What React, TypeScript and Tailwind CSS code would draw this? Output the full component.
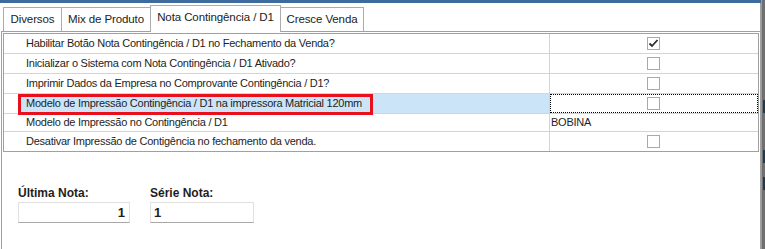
import React from 'react';
import clsx from 'clsx';

type Row = {
    label: string;
    kind: 'check' | 'text';
    checked?: boolean;
    value?: string;
    h: string;
    selected?: boolean;
};

const rows: Row[] = [
    { label: 'Habilitar Botão Nota Contingência / D1 no Fechamento da Venda?', kind: 'check', checked: true, h: 'h-[20px]' },
    { label: 'Inicializar o Sistema com Nota Contingência / D1 Ativado?', kind: 'check', h: 'h-[20px]' },
    { label: 'Imprimir Dados da Empresa no Comprovante Contingência / D1?', kind: 'check', h: 'h-[20px]' },
    { label: 'Modelo de Impressão Contingência / D1 na impressora Matricial 120mm', kind: 'check', h: 'h-[20px]', selected: true },
    { label: 'Modelo de Impressão no Contingência / D1', kind: 'text', value: 'BOBINA', h: 'h-[18px]' },
    { label: 'Desativar Impressão de Contigência no fechamento da venda.', kind: 'check', h: 'h-[19px]' },
];

const tabs = [
    { name: 'Diversos', w: 'w-[58px]' },
    { name: 'Mix de Produto', w: 'w-[89px]' },
    { name: 'Nota Contingência / D1', w: 'w-[131px]', active: true },
    { name: 'Cresce Venda', w: 'w-[83px]' },
];

const CheckBox = ({ checked }: { checked?: boolean }) => (
    <div className="w-[13px] h-[13px] border border-[#a9a9a9] bg-white flex items-center justify-center">
        {checked && (
            <svg width="11" height="11" viewBox="0 0 11 11">
                <polyline points="1.5,5.5 4,8 9.5,2" fill="none" stroke="#2b2b2b" strokeWidth="1.8" />
            </svg>
        )}
    </div>
);

export default function App() {
    return (
        <div className="w-[765px] h-[249px] flex bg-white overflow-hidden font-['Liberation_Sans',Arial,sans-serif] text-[11px] text-[#1e1e1e]">
            <div className="w-[761px] flex flex-col">
                <div className="h-[3px] bg-[#3e6b9e]" />
                <div className="flex-1 flex flex-col border-r border-[#a0a0a0]">
                    {/* tabs */}
                    <div className="h-[28px] flex items-end pl-[3px]">
                        {tabs.map((tab, i) => (
                            <div
                                key={tab.name}
                                className={clsx(
                                    'flex items-center justify-center bg-white border-t border-[#acacac]',
                                    tab.w,
                                    tab.active
                                        ? 'h-[27px] -mb-px border-l border-r relative z-10 pb-[2px]'
                                        : 'h-[24px]',
                                    !tab.active && i < 2 && 'border-l',
                                    i === 3 && 'border-r'
                                )}
                            >
                                <span className="text-[11.5px] tracking-[-0.1px] text-[#222]">{tab.name}</span>
                            </div>
                        ))}
                    </div>

                    {/* tab page */}
                    <div className="flex-1 flex flex-col ml-[1px] border-l border-t border-[#a0a0a0] pt-[1px] pl-[1px] pr-[1px]">
                        <div className="relative border border-[#a0a0a0] flex flex-col tracking-[-0.25px]">
                            {rows.map((row, i) => (
                                <div
                                    key={row.label}
                                    className={clsx('flex', row.h, i < rows.length - 1 && 'border-b border-[#d4d4d4]')}
                                >
                                    <div className="w-[17px]" />
                                    <div
                                        className={clsx(
                                            'w-[529px] flex items-center pl-[5px] border-r border-[#d4d4d4]',
                                            row.selected && 'bg-[#cce4f7]'
                                        )}
                                    >
                                        {row.label}
                                    </div>
                                    <div
                                        className={clsx(
                                            'flex-1 flex items-center',
                                            row.kind === 'check' ? 'justify-center pr-[2px]' : 'pl-[1px]',
                                            row.selected && 'border border-dotted border-black'
                                        )}
                                    >
                                        {row.kind === 'check' ? <CheckBox checked={row.checked} /> : row.value}
                                    </div>
                                </div>
                            ))}
                            {/* highlight annotation */}
                            <div className="absolute left-[14px] top-[60px] w-[355px] h-[21px] border-[3px] border-[#e8101a] pointer-events-none" />
                        </div>

                        <div className="flex gap-[20px] pl-[15px] mt-[34px]">
                            <div className="flex flex-col gap-[2px]">
                                <span className="font-bold text-[12px] leading-[14px]">Última Nota:</span>
                                <div className="w-[112px] h-[21px] border border-[#e0e0e0] border-b-[#a8a8a8] flex items-center justify-end pr-[4px] font-bold text-[13px]">
                                    1
                                </div>
                            </div>
                            <div className="flex flex-col gap-[2px]">
                                <span className="font-bold text-[12px] leading-[14px]">Série Nota:</span>
                                <div className="w-[104px] h-[21px] border border-[#e0e0e0] border-b-[#a8a8a8] flex items-center pl-[3px] font-bold text-[13px]">
                                    1
                                </div>
                            </div>
                        </div>
                    </div>
                </div>
            </div>
            <div className="w-[4px] flex flex-col bg-[#6f6f6f] border-l border-[#9a9a9a]">
                <div className="h-[100px]" />
                <div className="h-[13px] ml-[1px] bg-[#1f3b4a]" />
                <div className="h-[37px]" />
                <div className="h-[13px] ml-[1px] bg-[#1f3b4a]" />
                <div className="h-[14px]" />
                <div className="h-[13px] ml-[1px] bg-[#1f3b4a]" />
            </div>
        </div>
    );
}
